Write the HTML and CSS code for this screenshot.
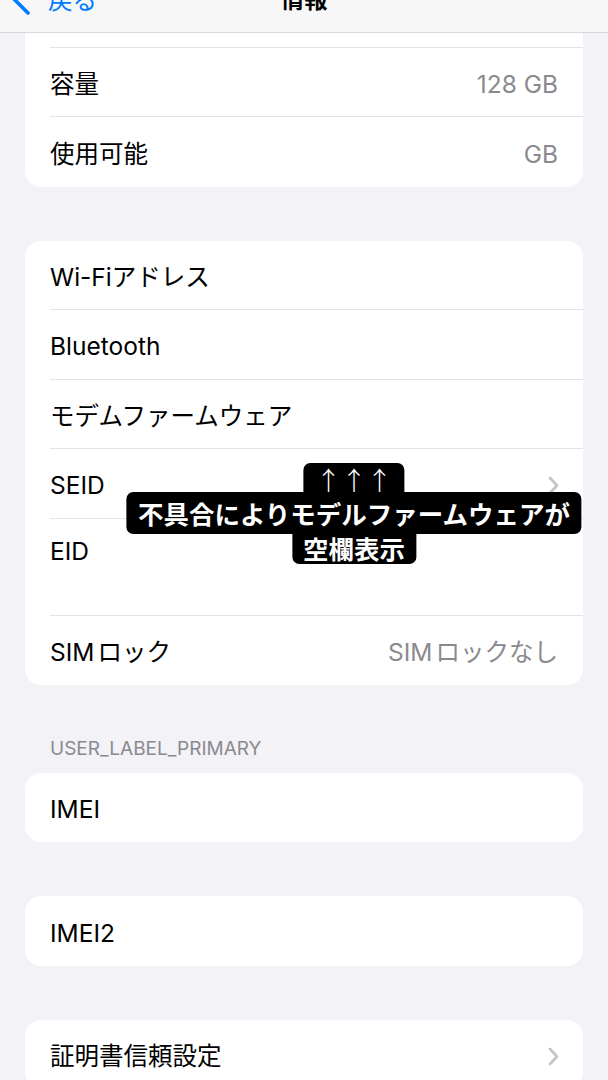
FILE: index.html
```html
<!DOCTYPE html>
<html lang="ja">
<head>
<meta charset="utf-8">
<title>情報</title>
<link rel="stylesheet" href="styles.css">
</head>
<body>
<header class="nav">
  <div class="nav-inner">
    <a class="back">
      <svg class="back-chev" width="21" height="34" viewBox="0 0 21 34"><path d="M18 2 L3 17 L18 32" fill="none" stroke="#007aff" stroke-width="3.6" stroke-linecap="round" stroke-linejoin="round"/></svg>
      <span class="back-label">戻る</span>
    </a>
    <span class="nav-title">情報</span>
    <span class="nav-spacer"></span>
  </div>
</header>

<main class="content">
  <section class="group group-first">
    <div class="row"><div class="row-inner"></div></div>
    <div class="row"><div class="row-inner"><span class="label">容量</span><span class="value">128 GB</span></div></div>
    <div class="row"><div class="row-inner"><span class="label">使用可能</span><span class="value">GB</span></div></div>
  </section>

  <section class="group group-spaced">
    <div class="row"><div class="row-inner"><span class="label">Wi-Fiアドレス</span></div></div>
    <div class="row"><div class="row-inner"><span class="label">Bluetooth</span></div></div>
    <div class="row"><div class="row-inner"><span class="label">モデムファームウェア</span></div></div>
    <div class="row"><div class="row-inner"><span class="label">SEID</span>
      <svg class="chev" width="11" height="19" viewBox="0 0 11 19"><path d="M2 2 L9 9.5 L2 17" fill="none" stroke="#c4c4c7" stroke-width="2.6" stroke-linecap="round" stroke-linejoin="round"/></svg>
    </div></div>
    <div class="row"><div class="row-inner row-tall"><span class="label">EID</span><span class="sub-value">&nbsp;</span></div></div>
    <div class="row"><div class="row-inner"><span class="label"><span class="latin">SIM</span>ロック</span><span class="value"><span class="latin">SIM</span>ロックなし</span></div></div>
  </section>

  <h2 class="section-header">USER_LABEL_PRIMARY</h2>
  <section class="group">
    <div class="row"><div class="row-inner"><span class="label">IMEI</span></div></div>
  </section>

  <section class="group group-spaced">
    <div class="row"><div class="row-inner"><span class="label">IMEI2</span></div></div>
  </section>

  <section class="group group-spaced">
    <div class="row"><div class="row-inner"><span class="label">証明書信頼設定</span>
      <svg class="chev" width="11" height="19" viewBox="0 0 11 19"><path d="M2 2 L9 9.5 L2 17" fill="none" stroke="#c4c4c7" stroke-width="2.6" stroke-linecap="round" stroke-linejoin="round"/></svg>
    </div></div>
  </section>
</main>

<div class="caption">
  <span class="cap-top">↑↑↑</span>
  <span class="cap-main">不具合によりモデルファームウェアが</span>
  <span class="cap-bottom">空欄表示</span>
</div>
</body>
</html>
```

FILE: styles.css
```css
html, body {
  margin: 0;
  padding: 0;
}
body {
  background: #f2f2f7;
  font-family: "Inter", "Noto Sans CJK JP", sans-serif;
  color: #000;
  width: 608px;
  height: 1080px;
  overflow: hidden;
  position: relative;
}

/* nav bar */
.nav {
  position: fixed;
  top: 0;
  left: 0;
  right: 0;
  height: 32px;
  background: #f7f7f8;
  border-bottom: 1px solid #d9d9dc;
  overflow: hidden;
  z-index: 5;
}
.nav-inner {
  margin-top: -24px;
  height: 44px;
  display: grid;
  grid-template-columns: 1fr auto 1fr;
  align-items: center;
}
.back {
  display: flex;
  align-items: center;
  padding-left: 10px;
  gap: 17px;
  color: #007aff;
  font-size: 24.5px;
}
.back-chev {
  display: block;
  flex: none;
}
.back-label {
  font-family: "Noto Sans CJK JP", sans-serif;
}
.nav-title {
  font-family: "Noto Sans CJK JP", sans-serif;
  font-weight: 700;
  font-size: 23.5px;
}

/* content */
.content {
  display: flow-root;
  padding: 0 25px;
}
.group {
  background: #fff;
  border-radius: 16px;
  overflow: hidden;
}
.group-first {
  margin-top: -22px;
}
.group-spaced {
  margin-top: 54px;
}
.row {
  padding-left: 25px;
}
.row-inner {
  box-sizing: border-box;
  height: 69.5px;
  padding-top: 4px;
  padding-right: 25px;
  border-bottom: 1px solid #e4e4e7;
  display: flex;
  align-items: center;
  justify-content: space-between;
}
.row:last-child .row-inner {
  border-bottom: none;
}
.row-tall {
  height: 97px;
  flex-direction: column;
  align-items: flex-start;
  justify-content: flex-start;
  padding-top: 15px;
}
.label {
  font-size: 24.5px;
  line-height: 34px;
  white-space: nowrap;
}
.value {
  font-size: 24.5px;
  line-height: 34px;
  color: #8a8a8e;
  white-space: nowrap;
}
.latin {
  margin-right: 3px;
}
.sub-value {
  font-size: 22px;
  line-height: 30px;
  color: #8a8a8e;
}
.chev {
  display: block;
  margin-right: -1px;
}
.section-header {
  margin: 51.5px 0 12px;
  padding-left: 25px;
  font-size: 19px;
  font-weight: 400;
  line-height: 24px;
  color: #8a8a8e;
}

/* caption overlay */
.caption {
  position: absolute;
  top: 463px;
  left: 354px;
  transform: translateX(-50%);
  display: flex;
  flex-direction: column;
  align-items: center;
  font-family: "Noto Sans CJK JP", sans-serif;
  color: #fff;
  z-index: 10;
}
.cap-top,
.cap-main,
.cap-bottom {
  display: block;
  background: #000;
  white-space: nowrap;
  font-size: 25.5px;
}
.cap-top {
  height: 29px;
  line-height: 31px;
  padding: 0 12px;
  border-radius: 7px 7px 0 0;
  font-weight: 300;
}
.cap-main {
  height: 42px;
  line-height: 42px;
  padding: 0 11.5px;
  border-radius: 7px;
  font-weight: 700;
}
.cap-bottom {
  height: 30px;
  line-height: 28px;
  padding: 0 11px;
  border-radius: 0 0 7px 7px;
  font-weight: 700;
}
```
